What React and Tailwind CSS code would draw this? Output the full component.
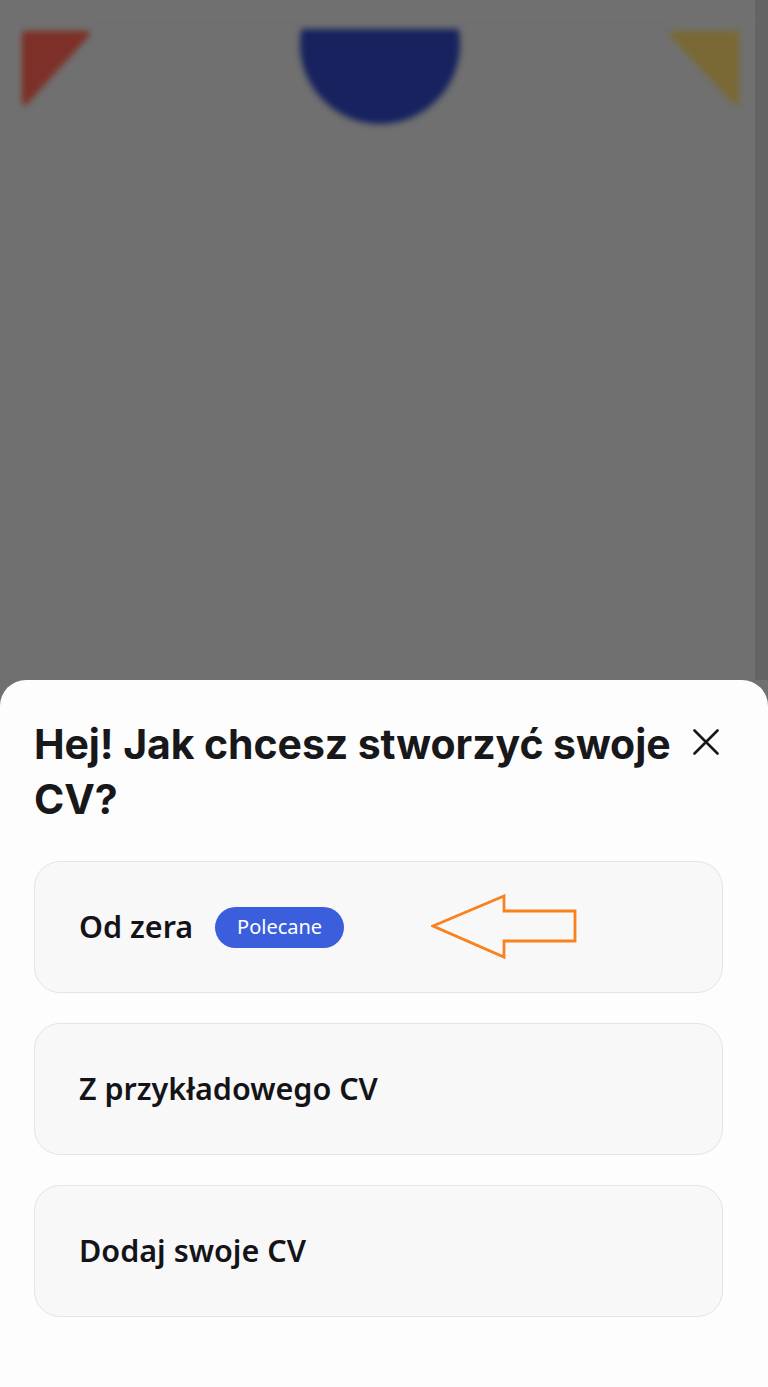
import React from "react";

const options = [
  { label: "Od zera", recommended: true },
  { label: "Z przykładowego CV" },
  { label: "Dodaj swoje CV" },
];

const Backdrop = () => {
  return (
    <div className="flex h-[680px] w-full overflow-hidden bg-[#707070]">
      {/* blurred page under the overlay */}
      <div className="flex-1 pl-[14px] pt-[15px] blur-[3px]">
        <div className="h-[700px] border-l border-t border-r border-[#797979] pr-[12px]">
          <div className="flex items-start justify-between pl-[5px] pr-[1px] pt-[13px]">
            <svg width="72" height="78" viewBox="0 0 72 78">
              <path d="M4 2 L68 2 Q72 2 68 8 L8 74 Q2 80 2 72 L2 4 Q2 2 4 2 Z" fill="#7d3027" />
            </svg>
            <svg width="160" height="95" viewBox="0 0 160 95">
              <circle cx="80" cy="15" r="80" fill="#17225f" />
            </svg>
            <svg width="74" height="78" viewBox="0 0 74 78">
              <path d="M6 2 L70 2 Q72 2 72 4 L72 72 Q72 80 66 74 L4 8 Q0 2 6 2 Z" fill="#7a6934" />
            </svg>
          </div>
        </div>
      </div>
      <div className="w-[13px] bg-[#636363]" />
    </div>
  );
};

const CloseIcon = () => (
  <svg width="26" height="26" viewBox="0 0 26 26" fill="none" stroke="#18181b" strokeWidth="2.6" strokeLinecap="round">
    <path d="M1.5 1.5 L24.5 24.5 M24.5 1.5 L1.5 24.5" />
  </svg>
);

const Arrow = () => (
  <svg width="148" height="66" viewBox="0 0 148 66" fill="none" stroke="#f7821e" strokeWidth="2.8" strokeLinejoin="miter">
    <path d="M2 32 L73 2 L73 17 L144 17 L144 47 L73 47 L73 63 Z" />
  </svg>
);

export default function App() {
  return (
    <div className="flex min-h-[1387px] w-full flex-col bg-[#707070]">
      <Backdrop />

      {/* Bottom sheet */}
      <div className="flex flex-1 flex-col rounded-t-[26px] bg-[#fdfdfd] pb-[70px] pl-[34px] pr-[45px] pt-[37px]">
        <div className="flex items-start justify-between">
          <h1 className="max-w-[645px] font-['Inter',sans-serif] text-[41px] font-bold leading-[55px] tracking-[-0.1px] text-[#18181b]">
            Hej! Jak chcesz stworzyć swoje CV?
          </h1>
          <button className="mr-[4px] mt-[12px]">
            <CloseIcon />
          </button>
        </div>

        <div className="mt-[34px] flex flex-col gap-[30px]">
          {options.map((o) => (
            <div
              key={o.label}
              className="flex h-[132px] items-center rounded-[26px] border border-[#e4e4e6] bg-[#f8f8f9] px-[44px]"
            >
              <span className="font-['Noto_Sans',sans-serif] text-[30.5px] font-semibold text-[#141418]">
                {o.label}
              </span>
              {o.recommended && (
                <>
                  <span className="ml-[22px] flex h-[41px] w-[129px] items-center justify-center rounded-full bg-[#3b5fdc] font-['Noto_Sans',sans-serif] text-[20px] text-white">
                    Polecane
                  </span>
                  <span className="ml-[87px] flex">
                    <Arrow />
                  </span>
                </>
              )}
            </div>
          ))}
        </div>
      </div>
    </div>
  );
}
